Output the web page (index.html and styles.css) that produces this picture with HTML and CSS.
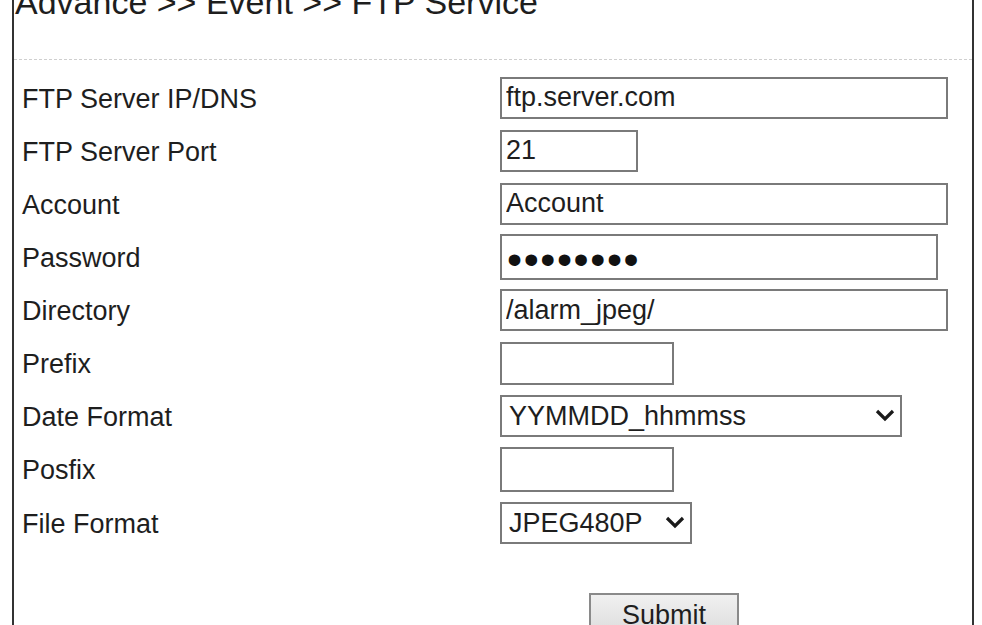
FILE: index.html
```html
<!DOCTYPE html>
<html>
<head>
<meta charset="utf-8">
<title>FTP Service</title>
<link rel="stylesheet" href="styles.css">
</head>
<body>
<div class="panel">
  <h1 class="title">Advance &gt;&gt; Event &gt;&gt; FTP Service</h1>
  <div class="sep"></div>
  <form class="form">
    <div class="row">
      <label class="lbl">FTP Server IP/DNS</label>
      <input class="field w-long" type="text" value="ftp.server.com">
    </div>
    <div class="row">
      <label class="lbl">FTP Server Port</label>
      <input class="field w-port" type="text" value="21">
    </div>
    <div class="row">
      <label class="lbl">Account</label>
      <input class="field w-long" type="text" value="Account">
    </div>
    <div class="row">
      <label class="lbl">Password</label>
      <input class="field w-pass pass" type="password" value="12345678">
    </div>
    <div class="row">
      <label class="lbl">Directory</label>
      <input class="field w-long" type="text" value="/alarm_jpeg/">
    </div>
    <div class="row">
      <label class="lbl">Prefix</label>
      <input class="field w-short" type="text" value="">
    </div>
    <div class="row">
      <label class="lbl">Date Format</label>
      <span class="sel-wrap w-date">
        <select class="sel">
          <option>YYMMDD_hhmmss</option>
        </select>
        <svg class="chev" width="20" height="14" viewBox="0 0 20 14"><path d="M2 3 L10 11 L18 3" fill="none" stroke="#1a1a1a" stroke-width="3.2"/></svg>
      </span>
    </div>
    <div class="row">
      <label class="lbl">Posfix</label>
      <input class="field w-short tall" type="text" value="">
    </div>
    <div class="row">
      <label class="lbl">File Format</label>
      <span class="sel-wrap w-file">
        <select class="sel">
          <option>JPEG480P</option>
        </select>
        <svg class="chev" width="20" height="14" viewBox="0 0 20 14"><path d="M2 3 L10 11 L18 3" fill="none" stroke="#1a1a1a" stroke-width="3.2"/></svg>
      </span>
    </div>
    <div class="actions">
      <button class="submit" type="button">Submit</button>
    </div>
  </form>
</div>
</body>
</html>
```

FILE: styles.css
```css
html, body {
  margin: 0;
  padding: 0;
  background: #ffffff;
  overflow: hidden;
}

body {
  font-family: "Liberation Sans", Arial, sans-serif;
  color: #1e1e1e;
}

.panel {
  box-sizing: border-box;
  margin-left: 12px;
  width: 962px;
  height: 625px;
  border-left: 2px solid #333333;
  border-right: 2px solid #333333;
  overflow: hidden;
}

.title {
  margin: -17px 0 0 1px;
  font-size: 34px;
  line-height: 38px;
  font-weight: normal;
  color: #1e1e1e;
  white-space: nowrap;
}

.sep {
  margin-top: 38px;
  border-top: 1px dashed #cfcfcf;
}

.form {
  padding: 11px 0 0 8px;
  margin: 0;
}

.row {
  display: grid;
  grid-template-columns: 478px auto;
  align-items: center;
  height: 53.125px;
}

.lbl {
  font-size: 27px;
  line-height: 31px;
  padding-top: 3px;
  color: #1e1e1e;
  white-space: nowrap;
}

.field {
  box-sizing: border-box;
  height: 42px;
  margin: 0;
  padding: 0 4px;
  border: 2px solid #7a7a7a;
  border-radius: 0;
  background: #ffffff;
  font-family: "Liberation Sans", Arial, sans-serif;
  font-size: 27px;
  color: #1e1e1e;
  outline: none;
}

.w-long { width: 448px; }
.w-port { width: 138px; }
.w-pass { width: 438px; height: 46px; }
.w-short { width: 174px; height: 43px; }
.tall { height: 45px; }

.pass {
  font-size: 43px;
  letter-spacing: 1.6px;
  padding-left: 5px;
  padding-top: 6px;
  color: #111111;
}

.sel-wrap {
  position: relative;
  display: block;
  height: 42px;
}

.w-date { width: 402px; }
.w-file { width: 192px; }

.sel {
  -webkit-appearance: none;
  appearance: none;
  box-sizing: border-box;
  width: 100%;
  height: 42px;
  margin: 0;
  padding: 0 30px 0 7px;
  border: 2px solid #7a7a7a;
  border-radius: 0;
  background: #ffffff;
  font-family: "Liberation Sans", Arial, sans-serif;
  font-size: 27px;
  color: #1e1e1e;
  outline: none;
}

.chev {
  position: absolute;
  right: 7px;
  top: 13px;
  pointer-events: none;
}

.actions {
  padding: 44px 0 0 567px;
}

.submit {
  box-sizing: border-box;
  width: 150px;
  height: 44px;
  margin: 0;
  padding: 0;
  border: 2px solid #8a8a8a;
  border-radius: 0;
  background: linear-gradient(#f0f0f0, #dcdcdc);
  font-family: "Liberation Sans", Arial, sans-serif;
  font-size: 27px;
  color: #1e1e1e;
}
```
